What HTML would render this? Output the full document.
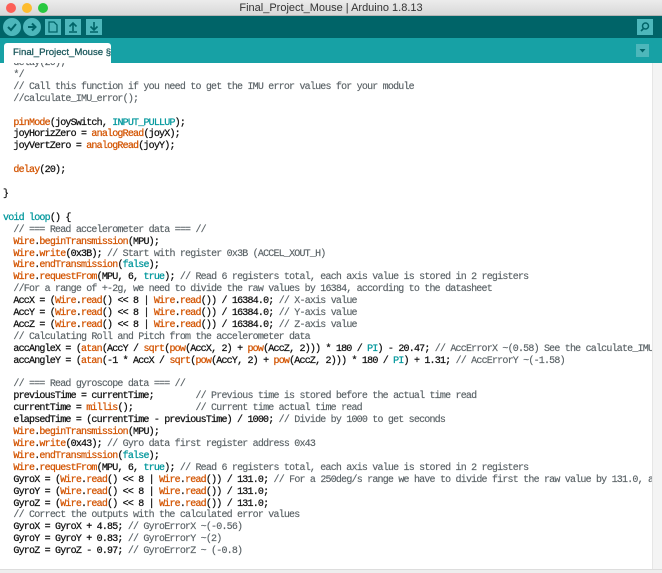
<!DOCTYPE html>
<html><head><meta charset="utf-8"><style>
*{margin:0;padding:0;box-sizing:border-box}
body{width:662px;height:573px;overflow:hidden;background:#fff;font-family:"Liberation Sans",sans-serif;position:relative}
#title{position:absolute;left:0;top:0;width:662px;height:16px;background:linear-gradient(#ececec,#d8d8d8);border-bottom:1px solid #b5b5b5;text-align:center;font-size:11px;line-height:16px;color:#333}
.dot{position:absolute;top:3px;width:10px;height:10px;border-radius:50%}
#tool{position:absolute;left:0;top:16px;width:662px;height:22px;background:#006468}
.rb{position:absolute;top:2px;width:18px;height:18px;border-radius:50%;background:#4db7bb}
.sq{position:absolute;top:3px;width:16px;height:16px;background:#4db7bb}
#tabs{position:absolute;left:0;top:38px;width:662px;height:25px;background:#17a1a5}
#tab{position:absolute;left:4px;top:5px;width:107px;height:20px;background:#fff;border-radius:3px 3px 0 0;font-size:9.6px;line-height:20px;padding-left:9px;color:#1e5a5e;white-space:nowrap;-webkit-text-stroke:0.3px #1e5a5e}
#codewrap{position:absolute;left:3px;top:63px;width:649px;height:506px;overflow:hidden}
#code{position:absolute;left:0;top:-5px;font-family:"Liberation Mono",monospace;font-size:10px;letter-spacing:-0.8px;line-height:11.9px;white-space:pre;color:#111;-webkit-text-stroke:0.25px #111}
.o{color:#d35400;-webkit-text-stroke:0.25px #d35400}.t{color:#00979c;-webkit-text-stroke:0.25px #00979c}.c{color:#5a6266;-webkit-text-stroke:0.15px #5a6266}
#sb{position:absolute;left:652px;top:63px;width:10px;height:510px;background:#f4f4f4;border-left:1px solid #e6e6e6}
#bot{position:absolute;left:0;top:569px;width:662px;height:4px;background:#eee;border-top:1px solid #ddd}
</style></head><body>
<div id="title"><span class="dot" style="left:6px;background:#fc5f57"></span><span class="dot" style="left:22px;background:#fdbc2e"></span><span class="dot" style="left:38px;background:#28c840"></span>Final_Project_Mouse | Arduino 1.8.13</div>
<div id="tool">
<div class="rb" style="left:3px"><svg width="18" height="18"><path d="M5 9l3 3 5-6" stroke="#006468" stroke-width="2" fill="none"/></svg></div>
<div class="rb" style="left:23px"><svg width="18" height="18"><path d="M5 9h7M9 5.5l3.5 3.5-3.5 3.5" stroke="#006468" stroke-width="2" fill="none"/></svg></div>
<div class="sq" style="left:45px"><svg width="16" height="16"><path d="M4 3h5l3 3v7H4z" stroke="#006468" stroke-width="1.3" fill="none"/></svg></div>
<div class="sq" style="left:65px"><svg width="16" height="16"><path d="M8 12V4M4.5 7.5L8 4l3.5 3.5M4 13h8" stroke="#006468" stroke-width="1.6" fill="none"/></svg></div>
<div class="sq" style="left:86px"><svg width="16" height="16"><path d="M8 3v8M4.5 7.5L8 11l3.5-3.5M4 13h8" stroke="#006468" stroke-width="1.6" fill="none"/></svg></div>
<div class="sq" style="left:637px"><svg width="16" height="16"><circle cx="8.5" cy="7" r="3" stroke="#006468" stroke-width="1.5" fill="none"/><path d="M6.5 9.5L4 12" stroke="#006468" stroke-width="1.6"/></svg></div>
</div>
<div id="tabs"><div id="tab">Final_Project_Mouse §</div>
<div style="position:absolute;left:636px;top:6px;width:13px;height:13px;background:#4db7bb"><svg width="13" height="13"><path d="M3.5 5h6L6.5 8.5z" fill="#006468"/></svg></div></div>
<div id="codewrap"><div id="code"><span class="c">  delay(20);
  */</span>
  <span class="c">// Call this function if you need to get the IMU error values for your module</span>
  <span class="c">//calculate_IMU_error();</span>

  <span class="o">pinMode</span>(joySwitch, <span class="t">INPUT_PULLUP</span>);
  joyHorizZero = <span class="o">analogRead</span>(joyX);
  joyVertZero = <span class="o">analogRead</span>(joyY);

  <span class="o">delay</span>(20);

}

<span class="t">void</span> <span class="t">loop</span>() {
  <span class="c">// === Read accelerometer data === //</span>
  <span class="o">Wire</span>.<span class="o">beginTransmission</span>(MPU);
  <span class="o">Wire</span>.<span class="o">write</span>(0x3B); <span class="c">// Start with register 0x3B (ACCEL_XOUT_H)</span>
  <span class="o">Wire</span>.<span class="o">endTransmission</span>(<span class="t">false</span>);
  <span class="o">Wire</span>.<span class="o">requestFrom</span>(MPU, 6, <span class="t">true</span>); <span class="c">// Read 6 registers total, each axis value is stored in 2 registers</span>
  <span class="c">//For a range of +-2g, we need to divide the raw values by 16384, according to the datasheet</span>
  AccX = (<span class="o">Wire</span>.<span class="o">read</span>() &lt;&lt; 8 | <span class="o">Wire</span>.<span class="o">read</span>()) / 16384.0; <span class="c">// X-axis value</span>
  AccY = (<span class="o">Wire</span>.<span class="o">read</span>() &lt;&lt; 8 | <span class="o">Wire</span>.<span class="o">read</span>()) / 16384.0; <span class="c">// Y-axis value</span>
  AccZ = (<span class="o">Wire</span>.<span class="o">read</span>() &lt;&lt; 8 | <span class="o">Wire</span>.<span class="o">read</span>()) / 16384.0; <span class="c">// Z-axis value</span>
  <span class="c">// Calculating Roll and Pitch from the accelerometer data</span>
  accAngleX = (<span class="o">atan</span>(AccY / <span class="o">sqrt</span>(<span class="o">pow</span>(AccX, 2) + <span class="o">pow</span>(AccZ, 2))) * 180 / <span class="t">PI</span>) - 20.47; <span class="c">// AccErrorX ~(0.58) See the calculate_IMU_error()</span>
  accAngleY = (<span class="o">atan</span>(-1 * AccX / <span class="o">sqrt</span>(<span class="o">pow</span>(AccY, 2) + <span class="o">pow</span>(AccZ, 2))) * 180 / <span class="t">PI</span>) + 1.31; <span class="c">// AccErrorY ~(-1.58)</span>

  <span class="c">// === Read gyroscope data === //</span>
  previousTime = currentTime;        <span class="c">// Previous time is stored before the actual time read</span>
  currentTime = <span class="o">millis</span>();            <span class="c">// Current time actual time read</span>
  elapsedTime = (currentTime - previousTime) / 1000; <span class="c">// Divide by 1000 to get seconds</span>
  <span class="o">Wire</span>.<span class="o">beginTransmission</span>(MPU);
  <span class="o">Wire</span>.<span class="o">write</span>(0x43); <span class="c">// Gyro data first register address 0x43</span>
  <span class="o">Wire</span>.<span class="o">endTransmission</span>(<span class="t">false</span>);
  <span class="o">Wire</span>.<span class="o">requestFrom</span>(MPU, 6, <span class="t">true</span>); <span class="c">// Read 6 registers total, each axis value is stored in 2 registers</span>
  GyroX = (<span class="o">Wire</span>.<span class="o">read</span>() &lt;&lt; 8 | <span class="o">Wire</span>.<span class="o">read</span>()) / 131.0; <span class="c">// For a 250deg/s range we have to divide first the raw value by 131.0, according</span>
  GyroY = (<span class="o">Wire</span>.<span class="o">read</span>() &lt;&lt; 8 | <span class="o">Wire</span>.<span class="o">read</span>()) / 131.0;
  GyroZ = (<span class="o">Wire</span>.<span class="o">read</span>() &lt;&lt; 8 | <span class="o">Wire</span>.<span class="o">read</span>()) / 131.0;
  <span class="c">// Correct the outputs with the calculated error values</span>
  GyroX = GyroX + 4.85; <span class="c">// GyroErrorX ~(-0.56)</span>
  GyroY = GyroY + 0.83; <span class="c">// GyroErrorY ~(2)</span>
  GyroZ = GyroZ - 0.97; <span class="c">// GyroErrorZ ~ (-0.8)</span>
</div></div>
<div id="sb"></div>
<div id="bot"></div>
</body></html>
